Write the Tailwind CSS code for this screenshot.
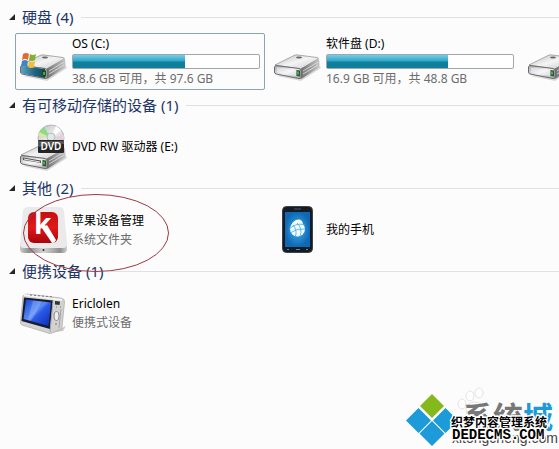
<!DOCTYPE html>
<html lang="zh-CN">
<head>
<meta charset="utf-8">
<meta name="viewport" content="width=device-width, initial-scale=1">
<title>计算机</title>
<script src="https://cdn.jsdelivr.net/npm/@tailwindcss/browser@4"></script>
</head>
<body class="bg-[#fcfcfc] font-['Noto_Sans','Noto_Sans_CJK_SC',sans-serif] text-xs text-black">
<svg class="absolute size-0" aria-hidden="true">
  <defs>
    <linearGradient id="top" x1="0" y1="0" x2="1" y2="1"><stop offset="0" stop-color="#bcbcbc"/><stop offset=".5" stop-color="#f4f4f4"/><stop offset="1" stop-color="#c8c8c8"/></linearGradient>
    <linearGradient id="side" x1="0" y1="0" x2="1" y2="0"><stop offset="0" stop-color="#6c6c6c"/><stop offset="1" stop-color="#c6c6c6"/></linearGradient>
    <linearGradient id="front" x1="0" y1="0" x2="1" y2="1"><stop offset="0" stop-color="#a9a9ad"/><stop offset=".5" stop-color="#efeff5"/><stop offset="1" stop-color="#a2a2a6"/></linearGradient>
    <linearGradient id="teal" x1="0" y1="0" x2="1" y2="0"><stop offset="0" stop-color="#5fa3c3"/><stop offset=".6" stop-color="#1b6282"/><stop offset="1" stop-color="#174c48"/></linearGradient>
    <linearGradient id="red" x1="0" y1="0" x2="0" y2="1"><stop offset="0" stop-color="#c40f12"/><stop offset=".5" stop-color="#e0181a"/><stop offset="1" stop-color="#a80508"/></linearGradient>
    <linearGradient id="base" x1="0" y1="0" x2="1" y2="0"><stop offset="0" stop-color="#c9c9c9"/><stop offset=".2" stop-color="#8e8e8e"/><stop offset=".5" stop-color="#d5d5d5"/><stop offset=".85" stop-color="#8e8e8e"/><stop offset="1" stop-color="#cfcfcf"/></linearGradient>
    <radialGradient id="phone"><stop offset="0" stop-color="#3fb0f0"/><stop offset="1" stop-color="#0f68b4"/></radialGradient>
    <linearGradient id="lcd" x1="0" y1="0" x2="1" y2="1"><stop offset="0" stop-color="#1546d8"/><stop offset=".45" stop-color="#5b8cf5"/><stop offset=".55" stop-color="#2a5be8"/><stop offset="1" stop-color="#0a2bb5"/></linearGradient>
    <linearGradient id="disc" x1="0" y1="0" x2="1" y2="1"><stop offset="0" stop-color="#b9b9b9"/><stop offset=".5" stop-color="#efefef"/><stop offset="1" stop-color="#a9a9a9"/></linearGradient>
    <symbol id="drive" viewBox="0 0 48 48">
      <path d="M3 39 27 44 47 31 45 27Z" fill="#000" opacity=".14"/>
      <path d="M1 28 20 18.500Q22 17.500 24 18L43 20.500Q45 21 44 22L27 32Z" fill="url(#top)" stroke="#8b8b8b" stroke-width=".7"/>
      <path d="M27 31.500 44.500 21.500Q46 24 45 30.500L28 41.500Q26 42 26 41Z" fill="url(#side)"/>
      <path d="M29 34 44 25M29 37 44 28" stroke="#dedede" stroke-width=".8"/>
      <path d="M1.500 28.500 25 31.500Q27 32 27 34V40.500Q26.500 42 25 41.500L2 37Q.500 36.500.500 35V30Z" fill="url(#front)" stroke="#6b6b6b"/>
      <path d="M3 30.500 22 33V39L3 35.500Z" fill="#fff" opacity=".45"/>
      <path d="M22.500 33 26 33.500V39.500L22.500 39Z" fill="#285b30"/><path d="M24 34.500V37.500" stroke="#8fe072"/>
      <ellipse cx="25" cy="20.500" rx="3" ry="1" fill="#686868"/>
    </symbol>
  </defs>
</svg>
<main class="relative min-h-screen overflow-hidden pt-[5px]">
  <section>
    <h2 class="flex h-6 items-center gap-2 pl-[9px] text-[15px] leading-6 text-[#1e3567]">
      <button type="button" class="flex items-center gap-[7px]" aria-expanded="true"><svg class="size-[6px]" viewBox="0 0 6 6" aria-hidden="true"><path d="M6 0V6H0Z" fill="#262626"/></svg>硬盘 (4)</button>
      <span class="h-px flex-1 bg-[#dfe1e4]"></span>
    </h2>
    <ul class="flex h-16 items-center gap-1 pl-[15px]">
      <li class="w-[250px] shrink-0">
        <a href="#" class="flex h-[57px] items-center gap-1 rounded-xs border border-[#8ba4ae] px-1">
          <svg class="size-12 shrink-0" viewBox="0 0 48 48" aria-hidden="true">
            <use href="#drive"/>
            <path d="M1 29 25 32V41L1 36.500Z" fill="url(#teal)"/>
            <path d="M22 33 25.500 33.500V40L22 39Z" fill="#17482a"/><path d="M24 35V38" stroke="#95ee65"/>
            <path d="M3 17Q6 15 9 17L8 23Q5 21 2 23Z" fill="#e4692e"/><path d="M10 17Q13 19 16 17L15 23Q12 25 9 23Z" fill="#86ae36"/>
            <path d="M2 24Q5 22 8 24L7 30Q4 28 1 30Z" fill="#3d88c4"/><path d="M9 24Q12 26 15 24L14 30Q11 32 8 30Z" fill="#f0be3c"/>
          </svg>
          <span class="flex min-w-0 flex-1 flex-col gap-[2px] leading-4">
            <span>OS (C:)</span>
            <span class="h-[15px] rounded-xs border border-[#a3a5a8] bg-white" role="progressbar" aria-valuenow="60" aria-label="OS (C:) 已用空间"><span class="block h-full bg-linear-to-b from-[#6fd0ea] from-0% via-[#32a6c6] via-45% to-[#0f7f9c] to-55%" style="width:60%"></span></span>
            <span class="text-[#6d6d6d]">38.6 GB 可用，共 97.6 GB</span>
          </span>
        </a>
      </li>
      <li class="w-[250px] shrink-0">
        <a href="#" class="flex h-[57px] items-center gap-1 border border-transparent px-1">
          <svg class="size-12 shrink-0" aria-hidden="true"><use href="#drive"/></svg>
          <span class="flex min-w-0 flex-1 flex-col gap-[2px] leading-4">
            <span>软件盘 (D:)</span>
            <span class="h-[15px] rounded-xs border border-[#a3a5a8] bg-white" role="progressbar" aria-valuenow="65" aria-label="软件盘 (D:) 已用空间"><span class="block h-full bg-linear-to-b from-[#6fd0ea] from-0% via-[#32a6c6] via-45% to-[#0f7f9c] to-55%" style="width:65%"></span></span>
            <span class="text-[#6d6d6d]">16.9 GB 可用，共 48.8 GB</span>
          </span>
        </a>
      </li>
      <li class="w-[250px] shrink-0">
        <a href="#" class="flex h-[57px] items-center border border-transparent px-1" aria-label="本地磁盘"><svg class="size-12 shrink-0" aria-hidden="true"><use href="#drive"/></svg></a>
      </li>
    </ul>
  </section>

  <section>
    <h2 class="flex h-6 items-center gap-2 pl-[9px] text-[15px] leading-6 text-[#1e3567]">
      <button type="button" class="flex items-center gap-[7px]" aria-expanded="true"><svg class="size-[6px]" viewBox="0 0 6 6" aria-hidden="true"><path d="M6 0V6H0Z" fill="#262626"/></svg>有可移动存储的设备 (1)</button>
      <span class="h-px flex-1 bg-[#dfe1e4]"></span>
    </h2>
    <ul class="flex h-[59px] items-center gap-1 pl-[15px]">
      <li class="w-[250px] shrink-0">
        <a href="#" class="flex items-center gap-1 border border-transparent px-1">
          <svg class="size-12 shrink-0" viewBox="0 0 48 48" aria-hidden="true">
            <use href="#drive" y="4"/>
            <path d="M3 34.500 21 37.500V40L3 37Z" fill="#555"/><path d="M4 36 20 39" stroke="#e9e9e9"/>
            <circle cx="31" cy="15" r="13" fill="url(#disc)" stroke="#a2a2a2" stroke-width=".7"/>
            <path d="M31 15 19 9Q21 6 24 4Z" fill="#8edb83"/><path d="M31 15 18 13 19 9Z" fill="#d9e7a0"/><path d="M31 15 36 3 41 7Z" fill="#fff"/><path d="M31 15 44 12V17Z" fill="#e6cfdd"/>
            <circle cx="31" cy="14" r="4" fill="#dfe7ea" stroke="#b5bcc0"/>
            <rect x="18" y="17" width="26" height="13" rx="1" fill="#252525"/><path d="M18 18H44V21L18 24Z" fill="#555"/>
            <text x="31" y="27" text-anchor="middle" font-family="Noto Sans" font-size="10" font-weight="600" fill="#fff">DVD</text>
          </svg>
          <span>DVD RW 驱动器 (E:)</span>
        </a>
      </li>
    </ul>
  </section>

  <section class="relative">
    <h2 class="flex h-6 items-center gap-2 pl-[9px] text-[15px] leading-6 text-[#1e3567]">
      <button type="button" class="flex items-center gap-[7px]" aria-expanded="true"><svg class="size-[6px]" viewBox="0 0 6 6" aria-hidden="true"><path d="M6 0V6H0Z" fill="#262626"/></svg>其他 (2)</button>
      <span class="h-px flex-1 bg-[#dfe1e4]"></span>
    </h2>
    <ul class="flex h-[59px] items-center gap-1 pl-[15px]">
      <li class="w-[250px] shrink-0">
        <a href="#" class="flex items-center gap-1 border border-transparent px-1">
          <svg class="size-12 shrink-0 overflow-visible" viewBox="0 0 48 48" aria-hidden="true">
            <path d="M0 36H47V43Q47 47 43 47H4Q0 47 0 43Z" fill="url(#base)"/>
            <path d="M3 5Q4 1 8 1H39Q43 1 44 5L47 38Q47 42 43 42H4Q0 42 0 38Z" fill="#eaeaea"/>
            <rect x="8" y="6" width="30" height="31" rx="6" fill="url(#red)"/>
            <text x="14" y="28" font-family="Open Sans" font-size="28" font-weight="700" fill="#fff">k</text>
            <path d="M22 22 27 19 36 34Q35 37 32 37Z" fill="#fff"/>
            <circle cx="23.500" cy="44" r="1" fill="#222"/>
          </svg>
          <span class="flex flex-col leading-[19px]"><span>苹果设备管理</span><span class="text-[#6d6d6d]">系统文件夹</span></span>
        </a>
      </li>
      <li class="w-[250px] shrink-0">
        <a href="#" class="flex items-center gap-1 border border-transparent px-1">
          <svg class="size-12 shrink-0" viewBox="0 0 48 48" aria-hidden="true">
            <rect x="8.500" y=".5" width="30" height="46" rx="4" fill="#131b25" stroke="#3b4148"/>
            <rect x="11" y="6" width="25" height="35" fill="url(#phone)"/>
            <path d="M20 3H27" stroke="#4f5962"/><path d="M13 43.500H15M22 43.500H26M32 43.500H34" stroke="#75818b"/>
            <path d="M22 14Q28 12 29 18Q24 16 17 20Q18 16 22 14Z" fill="#fff"/>
            <circle cx="23.500" cy="23" r="7.500" fill="#f1fbff"/>
            <path d="M15 23Q23 16 31 19M16 27Q23 22 31 23M23 17Q29 23 26 30M19 19Q24 25 21 31" fill="none" stroke="#43a9e6" stroke-width=".8"/>
          </svg>
          <span>我的手机</span>
        </a>
      </li>
    </ul>
    <svg class="absolute top-[17px] left-[22px] h-20 w-[148px]" viewBox="0 0 148 80" aria-hidden="true"><ellipse cx="74" cy="40" rx="72.500" ry="38.500" fill="none" stroke="#9b3946"/></svg>
  </section>

  <section>
    <h2 class="flex h-6 items-center gap-2 pl-[9px] text-[15px] leading-6 text-[#1e3567]">
      <button type="button" class="flex items-center gap-[7px]" aria-expanded="true"><svg class="size-[6px]" viewBox="0 0 6 6" aria-hidden="true"><path d="M6 0V6H0Z" fill="#262626"/></svg>便携设备 (1)</button>
      <span class="h-px flex-1 bg-[#dfe1e4]"></span>
    </h2>
    <ul class="flex h-[59px] items-center gap-1 pl-[15px]">
      <li class="w-[250px] shrink-0">
        <a href="#" class="flex items-center gap-1 border border-transparent px-1">
          <svg class="size-12 shrink-0" viewBox="0 0 48 48" aria-hidden="true">
            <path d="M30 44 46 37 43 42Z" fill="#000" opacity=".2"/>
            <path d="M3 7Q4 5 7 5L41 9Q45 10 44.500 13L42 38Q42 40 39 41L32 44Q30 45 28 44L2 36Q0 35 .5 33Z" fill="#d2d2d2" stroke="#a7a7a7" stroke-width=".7"/>
            <path d="M4 6 42 11" stroke="#f4f4f4" stroke-width="2"/><path d="M10 6 34 8" stroke="#777" stroke-dasharray="2 2"/>
            <path d="M4 8.500 33 11.500 30 40 1.500 32Z" fill="#161b2e"/>
            <path d="M6 10.500 31 13.500 28.500 37 3.500 30Z" fill="url(#lcd)"/>
            <path d="M13 11.500 22 12.500 11 32 8 31Z" fill="#fff" opacity=".2"/>
            <path d="M35 12 40 12.500 39.500 16 35 15.500Z" fill="#333"/><path d="M36 18H37M40 18H41M35 35H37" stroke="#777"/>
            <ellipse cx="36.500" cy="27" rx="2.500" ry="4.500" fill="#eee" stroke="#858585"/>
            <path d="M41 20 39 39M33 12 30 43" stroke="#a5a5a5"/>
          </svg>
          <span class="flex flex-col leading-[19px]"><span>Ericlolen</span><span class="text-[#6d6d6d]">便携式设备</span></span>
        </a>
      </li>
    </ul>
  </section>

  <!-- site watermark over the bottom right corner -->
  <svg class="absolute right-0 bottom-0 h-[69px] w-[159px] overflow-visible" viewBox="0 0 159 69" role="img" aria-label="系统城 xitongcheng.com">
    <g fill="#fff" stroke="#e3e3e3"><ellipse cx="70" cy="16" rx="4" ry="5"/><ellipse cx="79" cy="13" rx="4" ry="5"/><ellipse cx="62" cy="24" rx="4" ry="5"/><ellipse cx="75" cy="30" rx="9" ry="8"/></g>
    <path d="M32 14 44 26 32 38 20 26Z" fill="#85b81b"/>
    <path d="M18.500 28 31 40.500 18.500 53 6 40.500ZM45.500 28 58 40.500 45.500 53 33 40.500ZM32 41 44.500 53.500 32 66 19.500 53.500Z" fill="#1d9bd8"/>
    <text x="63" y="48" font-family="Noto Sans CJK SC" font-size="30" font-weight="700" fill="#777">系统<tspan fill="#1d9bd8">城</tspan></text>
    <text x="52" y="63" font-family="Liberation Sans" font-size="14" fill="#444">xitongcheng.com</text>
    <g fill="#000" stroke="#fff" stroke-width="3" stroke-linejoin="round" paint-order="stroke">
      <text x="51" y="47" font-family="Noto Sans CJK SC" font-size="12" font-weight="700">织梦内容管理系统</text>
      <text x="52" y="59" font-family="Liberation Mono" font-size="14" font-weight="700">DEDECMS.COM</text>
    </g>
  </svg>
</main>
</body>
</html>
